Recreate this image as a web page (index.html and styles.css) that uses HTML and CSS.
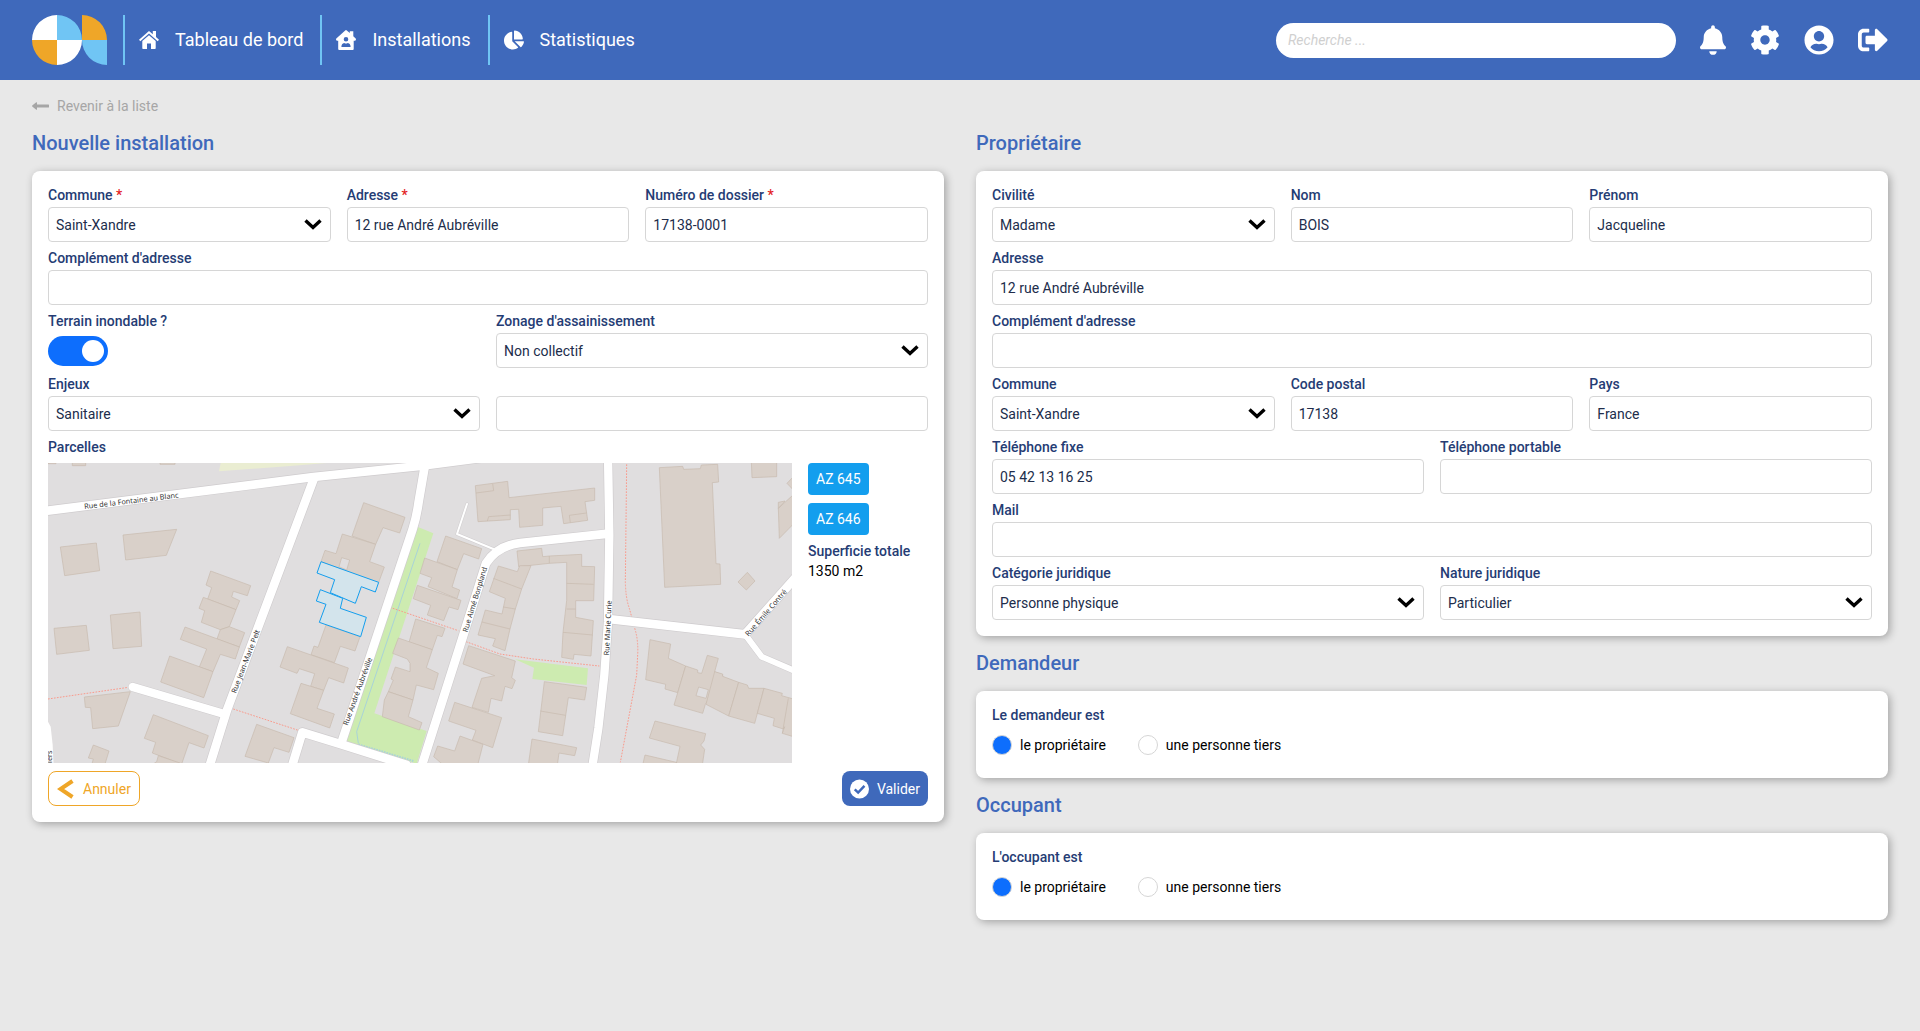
FILE: index.html
```html
<!DOCTYPE html>
<html lang="fr">
<head>
<meta charset="utf-8">
<meta name="viewport" content="width=device-width, initial-scale=1">
<title>Nouvelle installation</title>
<link rel="stylesheet" href="styles.css">
</head>
<body>
<header class="topbar">
  <a class="logo" href="#" aria-label="Accueil">
    <svg viewBox="0 0 75 50" width="75" height="50">
      <path fill="#fff" d="M25 0A25 25 0 0 0 0 25H25ZM25 50A25 25 0 0 0 50 25H25Z"/>
      <path fill="#70c5f4" d="M25 0A25 25 0 0 1 50 25H25ZM50 25A25 25 0 0 0 75 50V25Z"/>
      <path fill="#efa628" d="M25 50A25 25 0 0 1 0 25H25ZM50 0A25 25 0 0 1 75 25H50Z"/>
    </svg>
  </a>
  <nav class="nav">
    <a class="nav-item" href="#">
      <svg viewBox="0 0 20 20" width="20" height="20" fill="#fff"><path d="M10 1 0 9.800l1.300 1.500L10 3.600l8.700 7.700L20 9.800l-3-2.700V1h-3.200v3.300z"/><path d="M10 5.200 3.300 11v7.200q0 .8.800.8H8v-5.500h4V19h3.900q.8 0 .8-.8V11z"/></svg>
      <span>Tableau de bord</span>
    </a>
    <a class="nav-item" href="#">
      <svg viewBox="0 0 20 20" width="20" height="20" fill="#fff" fill-rule="evenodd"><path d="M9.200.4Q10 -.3 10.800.4L13.800 3V1.200h3.500v5l2.400 2.200q.8 1.900-.7 2.300h-1.300V19q0 1-1 1H3.200q-1 0-1-1v-8.300H1Q-.5 10.300.3 8.400zM10 7a2.300 2.300 0 1 0 0 4.600A2.300 2.300 0 0 0 10 7zM8.200 13q-2.800.4-2.800 4h9.200q0-3.600-2.800-4-1.800 1-3.600 0z"/></svg>
      <span>Installations</span>
    </a>
    <a class="nav-item" href="#">
      <svg viewBox="0 0 544 512" width="20" height="20" fill="#fff"><path d="M527.790 288H290.500l158.030 158.030c6.040 6.040 15.980 6.530 22.190.680 38.700-36.460 65.320-85.610 73.130-140.860 1.340-9.460-6.510-17.850-16.060-17.850zm-15.830-64.800C503.720 103.740 408.260 8.280 288.800.04 279.680-.59 272 7.100 272 16.240V240h223.770c9.140 0 16.820-7.680 16.190-16.800zM224 288V50.710c0-9.550-8.390-17.400-17.840-16.060C86.990 51.490-4.100 155.600.14 280.370 4.500 408.510 114.830 513.590 243.030 511.980c50.400-.63 96.970-16.870 135.260-44.030 7.900-5.600 8.420-17.230 1.570-24.080L224 288z"/></svg>
      <span>Statistiques</span>
    </a>
  </nav>
  <div class="tools">
    <input class="search" type="search" placeholder="Recherche ..." aria-label="Recherche">
    <button class="icon-btn" type="button" aria-label="Notifications">
      <svg viewBox="0 0 448 512" width="26" height="30" fill="#fff"><path d="M224 512c35.320 0 63.970-28.650 63.970-64H160.030c0 35.350 28.650 64 63.970 64zm215.390-149.710c-19.320-20.760-55.470-51.990-55.470-154.290 0-77.700-54.480-139.900-127.940-155.160V32c0-17.670-14.320-32-31.980-32s-31.980 14.330-31.980 32v20.840C118.560 68.100 64.080 130.300 64.080 208c0 102.300-36.150 133.530-55.470 154.290-6 6.450-8.660 14.160-8.610 21.710.11 16.400 12.980 32 32.100 32h383.800c19.120 0 32-15.600 32.100-32 .05-7.550-2.610-15.270-8.610-21.710z"/></svg>
    </button>
    <button class="icon-btn" type="button" aria-label="Paramètres">
      <svg viewBox="0 0 512 512" width="30" height="30" fill="#fff"><path d="M487.400 315.700l-42.600-24.600c4.300-23.200 4.300-47 0-70.200l42.600-24.600c4.900-2.800 7.100-8.600 5.500-14-11.100-35.600-30-67.800-54.700-94.600-3.800-4.100-10-5.100-14.800-2.300L380.800 110c-17.900-15.400-38.500-27.300-60.800-35.100V25.800c0-5.600-3.900-10.500-9.400-11.700-36.700-8.200-74.300-7.800-109.200 0-5.500 1.200-9.400 6.100-9.400 11.700V75c-22.200 7.900-42.800 19.800-60.800 35.100L88.700 85.500c-4.900-2.800-11-1.900-14.800 2.300-24.700 26.700-43.600 58.900-54.700 94.600-1.700 5.400.6 11.200 5.500 14L67.300 221c-4.300 23.200-4.300 47 0 70.200l-42.600 24.600c-4.900 2.800-7.100 8.600-5.500 14 11.100 35.600 30 67.800 54.700 94.600 3.800 4.100 10 5.100 14.800 2.300l42.600-24.600c17.900 15.400 38.500 27.300 60.800 35.100v49.200c0 5.600 3.900 10.500 9.400 11.700 36.700 8.200 74.300 7.800 109.200 0 5.500-1.200 9.400-6.100 9.400-11.700v-49.200c22.200-7.900 42.800-19.800 60.800-35.100l42.600 24.600c4.900 2.800 11 1.900 14.800-2.300 24.700-26.700 43.600-58.900 54.700-94.600 1.500-5.500-.7-11.300-5.600-14.100zM256 336c-44.100 0-80-35.900-80-80s35.900-80 80-80 80 35.900 80 80-35.900 80-80 80z"/></svg>
    </button>
    <button class="icon-btn" type="button" aria-label="Mon compte">
      <svg viewBox="0 0 496 512" width="30" height="30" fill="#fff"><path d="M248 8C111 8 0 119 0 256s111 248 248 248 248-111 248-248S385 8 248 8zm0 96c48.600 0 88 39.400 88 88s-39.400 88-88 88-88-39.400-88-88 39.400-88 88-88zm0 344c-58.700 0-111.300-26.600-146.500-68.200 18.800-35.400 55.600-59.800 98.500-59.800 2.400 0 4.800.4 7.100 1.100 13 4.200 26.600 6.900 40.900 6.900 14.300 0 28-2.700 40.900-6.900 2.300-.7 4.700-1.100 7.100-1.100 42.900 0 79.700 24.400 98.500 59.800C359.300 421.400 306.700 448 248 448z"/></svg>
    </button>
    <button class="icon-btn" type="button" aria-label="Se déconnecter">
      <svg viewBox="0 0 512 512" width="30" height="30" fill="#fff"><path d="M497 273L329 441c-15 15-41 4.500-41-17v-96H152c-13.300 0-24-10.700-24-24v-96c0-13.300 10.700-24 24-24h136V88c0-21.400 25.900-32 41-17l168 168c9.300 9.400 9.300 24.600 0 34zM192 436v-40c0-6.600-5.400-12-12-12H96c-17.700 0-32-14.300-32-32V160c0-17.700 14.300-32 32-32h84c6.600 0 12-5.400 12-12V76c0-6.600-5.400-12-12-12H96c-53 0-96 43-96 96v192c0 53 43 96 96 96h84c6.600 0 12-5.400 12-12z"/></svg>
    </button>
  </div>
</header>

<main class="page">
  <a class="back" href="#">
    <svg viewBox="0 0 17 8" width="17" height="8" fill="#a6a6a6"><path d="M4.300.3Q5 0 5 .8v1.700h11.500q.5 0 .5.500v2q0 .5-.5.500H5v1.700q0 .8-.7.500L.2 4.400Q0 4 .2 3.600z"/></svg>
    <span>Revenir à la liste</span>
  </a>

  <form class="columns">
    <div class="column">
      <section class="block">
        <h2 class="title">Nouvelle installation</h2>
        <div class="card">
          <div class="row row-3">
            <div class="field"><label for="i-commune">Commune <span class="req">*</span></label><select id="i-commune"><option>Saint-Xandre</option></select></div>
            <div class="field"><label for="i-adresse">Adresse <span class="req">*</span></label><input id="i-adresse" type="text" value="12 rue André Aubréville"></div>
            <div class="field"><label for="i-dossier">Numéro de dossier <span class="req">*</span></label><input id="i-dossier" type="text" value="17138-0001"></div>
          </div>
          <div class="field"><label for="i-compl">Complément d'adresse</label><input id="i-compl" type="text"></div>
          <div class="row row-2">
            <div class="field"><label for="i-inond">Terrain inondable ?</label><div class="control"><input class="toggle" id="i-inond" type="checkbox" checked></div></div>
            <div class="field"><label for="i-zonage">Zonage d'assainissement</label><select id="i-zonage"><option>Non collectif</option></select></div>
          </div>
          <div class="row row-2">
            <div class="field"><label for="i-enjeux">Enjeux</label><select id="i-enjeux"><option>Sanitaire</option></select></div>
            <div class="field"><input type="text" aria-label="Précision sur les enjeux"></div>
          </div>
          <span class="label">Parcelles</span>
          <div class="parcels">
            <svg class="map" viewBox="24 24 2232 900" preserveAspectRatio="xMidYMid slice" role="img" aria-label="Plan des parcelles">
              <rect class="land" x="0" y="0" width="2300" height="960"/>
              <path fill="#eaedd2" d="M543 20H860V24L760 32 537 49z"/>
              <path class="green" d="M1132 215 1180 235 1003 775 1160 828 1130 926 918 858z"/>
              <path class="green" d="M1425 613 1644 640 1640 690 1477 672 1482 638z"/>
              <path class="stream" d="M1140 265 950 830 955 865"/>
              <path class="stream stream-dash" d="M955 868 1120 918"/>
              <g class="building">
                <path d="M97 20H137V32H97zM360 20H405V28H360zM24 20H48V26H24z"/>
                <path d="M61 276 169 264 179 347 74 362zM249 240 410 223 379 301 257 315zM42 520 139 511 148 586 50 598zM211 480 300 471 305 574 219 581z"/>
                <path d="M133 726 271 710 235 813 158 821 152 758 136 757z"/>
                <path d="M340 779 505 842 492 879 447 863 424 930 400 918 337 894 347 862 313 850z"/>
                <path d="M355 902 420 924V930H335L350 920z"/>
                <path d="M160 870 207 888 194 930H155L160 912 145 909z"/>
                <path d="M650 808 762 848 747 892 702 878 685 924 615 904z"/>
                <path d="M512 348 632 392 622 422 580 409 575 426 599 437 588 464 503 432 515 398 498 390z"/>
                <path d="M490 427 588 464 568 515 541 524 484 502 494 467 477 460z"/>
                <path d="M568 515 614 533 598 576 531 552 541 524z"/>
                <path d="M435 516 598 576 586 612 541 598 519 650 478 636 500 582 421 553z"/>
                <path d="M389 603 519 650 491 728 362 681z"/>
                <path d="M971 143 1095 187 1079 234 1029 218 1007 268 936 243z"/>
                <path fill-rule="evenodd" d="M907 237 1007 268 989 320 1033 336 1015 385 843 320 855 286 888 296zM905 308 929 315 920 345 897 335z"/>
                <path d="M858 510 960 545 945 588 901 574 883 623 813 599 822 573 834 577z"/>
                <path d="M742 575 925 639 911 684 866 668 851 706 812 694 824 656 778 641 771 655 720 636z"/>
                <path d="M783 685 851 706 831 760 883 777 869 819 751 776z"/>
              </g>
              <g class="building" transform="translate(1110)">
                <path d="M107 243 215 281 206 312 161 296 142 344 81 320z"/>
                <path d="M44 309 142 344 126 396 149 405 141 431 54 395 65 368 30 355z"/>
                <path d="M22 391 153 436 144 464 117 456 101 497 52 480 62 451 10 431z"/>
                <path d="M17 492 105 520 96 545 82 541 67 584-3 562z"/>
                <path d="M-35 549 67 584 49 638 85 655 71 704 19 690 9 735-65 710-50 675-57 672-44 636 0 650V625L-8 612-52 595z"/>
                <path d="M-65 710 9 735-5 785 36 803 28 825-83 785-77 735z"/>
                <path d="M196 92 293 79 297 128 554 99V136L525 140 533 196 461 206 453 154 398 159V211L329 217 326 163 301 164V194L204 200z"/>
                <path class="line" d="M198 114 251 107 248 86M301 180 236 185 232 198M529 174 478 181 481 203"/>
                <path d="M321 288 395 280 398 305 418 303 515 298V334L554 335 551 437H497V487L550 497 543 603 492 598 490 613 455 607 459 532 470 436V322L418 325 326 335z"/>
                <path class="line" d="M418 303V325M470 385 551 388M470 462H497M459 532 548 540"/>
                <path d="M265 333 322 350 329 332H363L335 402 316 462 300 522 285 587 248 573 256 551 204 540 226 465 276 477 286 430 238 410z"/>
                <path class="line" d="M250 370 335 402M280 456 316 462M216 501 300 522"/>
                <path d="M176 572 316 618 305 668 316 676 306 701 285 694 275 738 243 730 235 772 186 757 215 670 254 662 159 627z"/>
                <path d="M134 742 275 788 248 878 187 855 198 826 116 798z"/>
                <path d="M150 843 219 868 203 930H100L71 905 83 873 134 888z"/>
                <path d="M403 680 530 697 524 735 475 728 458 842 385 830z"/>
                <path class="line" d="M391 768 467 781"/>
                <path d="M366 852 500 878 494 902 447 894 442 930H355z"/>
                <path d="M748 38 818 34 821 43 871 41 874 30 923 28 926 81 907 83 918 326 930 327 932 388 764 397z"/>
                <path d="M1024 20H1100V65L1026 68zM1012 352 1035 378 1009 405 984 381zM1160 110 1105 160 1108 250 1160 197zM1105 142 1125 138 1105 160zM1150 65 1131 85 1150 105z"/>
                <path d="M720 554 782 567 775 610 827 633 803 713 765 702 767 688 707 674z"/>
                <path fill-rule="evenodd" d="M827 633 863 645V653L875 655 892 601 925 610 914 650 938 660 886 748 878 775 792 750zM866 696 895 704 888 730 858 722z"/>
                <path d="M914 650 938 657V664L986 682 956 783 888 748z"/>
                <path d="M986 682 1012 690 1016 700 1062 700 1034 805 956 783z"/>
                <path d="M1062 700 1117 715 1115 722 1150 732V845L1117 835 1124 815 1120 822 1089 812 1093 790 1042 775z"/>
                <path class="line" d="M1135 730 1117 835"/>
                <path d="M735 798 887 836 882 858 872 870 884 883 877 930H798L810 874 718 849zM705 900 799 922V930H698z"/>
              </g>
              <g class="path-dash">
                <path d="M24 732 265 697M580 762 775 826M1050 457 1255 527M1278 560 1380 597 1480 612 1678 633M1760 28 1756 380Q1757 430 1768 460L1787 530Q1795 560 1793 600L1790 660 1741 922"/>
              </g>
              <g class="road road-edge">
                <path d="M0 170 820 66 1140 33 1330 8" stroke-width="30"/>
                <path d="M822 70 561 765 508 935" stroke-width="30"/>
                <path d="M278 696 550 776" stroke-width="28"/>
                <path d="M1155 30 1136 140Q1130 185 1118 222L904 864" stroke-width="30"/>
                <path d="M754 940 787 832 904 868 1100 930" stroke-width="30"/>
                <path d="M1705 236 1440 264Q1372 272 1338 325L1308 420 1267 550 1146 930" stroke-width="30"/>
                <path d="M1281 147 1251 237 1360 282" stroke-width="9"/>
                <path d="M1704 0 1708 240 1704 500 1693 660 1675 820 1657 935" stroke-width="29"/>
                <path d="M1705 492 2115 538 2270 364" stroke-width="30"/>
                <path d="M2115 538 2165 605 2270 650" stroke-width="21"/>
              </g>
              <g class="road">
                <path d="M0 170 820 66 1140 33 1330 8" stroke-width="26"/>
                <path d="M822 70 561 765 508 935" stroke-width="26"/>
                <path d="M278 696 550 776" stroke-width="25"/>
                <path d="M1155 30 1136 140Q1130 185 1118 222L904 864" stroke-width="26"/>
                <path d="M754 940 787 832 904 868 1100 930" stroke-width="26"/>
                <path d="M1705 236 1440 264Q1372 272 1338 325L1308 420 1267 550 1146 930" stroke-width="26"/>
                <path d="M1281 147 1251 237 1360 282" stroke-width="6"/>
                <path d="M1704 0 1708 240 1704 500 1693 660 1675 820 1657 935" stroke-width="25"/>
                <path d="M1705 492 2115 538 2270 364" stroke-width="26"/>
                <path d="M2115 538 2165 605 2270 650" stroke-width="18"/>
              </g>
              <path fill="#fff" d="M0 800H24L32 815 38 870 41 940H0z"/>
              <path class="plot" d="M843 320 1016 382 1006 411 964 395 946 445 871 413 884 374 831 354z"/>
              <path class="plot" d="M841 404 908 430 901 460 979 487 962 545 838 502 858 448 829 438z"/>
              <g class="street">
                <text transform="translate(275 145) rotate(-7)">Rue de la Fontaine au Blanc</text>
                <text transform="translate(624 622) rotate(-69)">Rue Jean-Marie Pelt</text>
                <text transform="translate(960 712) rotate(-70)">Rue André Aubréville</text>
                <text transform="translate(1312 436) rotate(-73)">Rue Aimé Bonpland</text>
                <text transform="translate(1711 519) rotate(-87)">Rue Marie Curie</text>
                <text transform="translate(2184 478) rotate(-49)">Rue Émile Contré</text>
                <text transform="translate(36 905) rotate(-90)">iers</text>
              </g>
            </svg>
            <div class="parcel-info">
              <span class="tag">AZ 645</span>
              <span class="tag">AZ 646</span>
              <dl class="surface"><dt class="label">Superficie totale</dt><dd>1350 m2</dd></dl>
            </div>
          </div>
          <div class="actions">
            <button class="btn btn-cancel" type="button">
              <svg viewBox="0 0 18 20" width="18" height="20" fill="none" stroke="#efa628" stroke-width="4"><path d="M15.500 2 3.500 10l12 8"/></svg>
              <span>Annuler</span>
            </button>
            <button class="btn btn-ok" type="submit">
              <svg viewBox="0 0 20 20" width="19" height="20"><circle cx="10" cy="10" r="10" fill="#fff"/><path d="M5 10.300 8.600 13.800 15.200 6.800" fill="none" stroke="#3f69bb" stroke-width="2.600"/></svg>
              <span>Valider</span>
            </button>
          </div>
        </div>
      </section>
    </div>

    <div class="column">
      <section class="block">
        <h2 class="title">Propriétaire</h2>
        <div class="card">
          <div class="row row-3">
            <div class="field"><label for="p-civ">Civilité</label><select id="p-civ"><option>Madame</option></select></div>
            <div class="field"><label for="p-nom">Nom</label><input id="p-nom" type="text" value="BOIS"></div>
            <div class="field"><label for="p-prenom">Prénom</label><input id="p-prenom" type="text" value="Jacqueline"></div>
          </div>
          <div class="field"><label for="p-adresse">Adresse</label><input id="p-adresse" type="text" value="12 rue André Aubréville"></div>
          <div class="field"><label for="p-compl">Complément d'adresse</label><input id="p-compl" type="text"></div>
          <div class="row row-3">
            <div class="field"><label for="p-commune">Commune</label><select id="p-commune"><option>Saint-Xandre</option></select></div>
            <div class="field"><label for="p-cp">Code postal</label><input id="p-cp" type="text" value="17138"></div>
            <div class="field"><label for="p-pays">Pays</label><input id="p-pays" type="text" value="France"></div>
          </div>
          <div class="row row-2">
            <div class="field"><label for="p-fixe">Téléphone fixe</label><input id="p-fixe" type="tel" value="05 42 13 16 25"></div>
            <div class="field"><label for="p-port">Téléphone portable</label><input id="p-port" type="tel"></div>
          </div>
          <div class="field"><label for="p-mail">Mail</label><input id="p-mail" type="email"></div>
          <div class="row row-2">
            <div class="field"><label for="p-cat">Catégorie juridique</label><select id="p-cat"><option>Personne physique</option></select></div>
            <div class="field"><label for="p-nat">Nature juridique</label><select id="p-nat"><option>Particulier</option></select></div>
          </div>
        </div>
      </section>

      <section class="block">
        <h2 class="title">Demandeur</h2>
        <div class="card">
          <fieldset class="choices">
            <legend class="label">Le demandeur est</legend>
            <div class="control">
              <label class="choice"><input type="radio" name="demandeur" checked>le propriétaire</label>
              <label class="choice"><input type="radio" name="demandeur">une personne tiers</label>
            </div>
          </fieldset>
        </div>
      </section>

      <section class="block">
        <h2 class="title">Occupant</h2>
        <div class="card">
          <fieldset class="choices">
            <legend class="label">L'occupant est</legend>
            <div class="control">
              <label class="choice"><input type="radio" name="occupant" checked>le propriétaire</label>
              <label class="choice"><input type="radio" name="occupant">une personne tiers</label>
            </div>
          </fieldset>
        </div>
      </section>
    </div>
  </form>
</main>
</body>
</html>
```

FILE: styles.css
```css
*,
*::before,
*::after {
  box-sizing: border-box;
}

body {
  margin: 0;
  background: #e8e8e8;
  color: #000;
  font: 14px/16px Roboto, "Liberation Sans", sans-serif;
}

button,
input,
select {
  margin: 0;
  font: inherit;
}

svg {
  display: block;
  flex: none;
}

/* Header */
.topbar {
  display: flex;
  align-items: center;
  min-height: 80px;
  padding: 0 32px;
  background: #3f69bb;
}

.logo {
  margin-right: 16px;
}

.nav {
  display: flex;
}

.nav-item {
  display: flex;
  align-items: center;
  gap: 16px;
  height: 50px;
  padding: 0 17px 0 14px;
  border-left: 2px solid #70c5f4;
  color: #fff;
  font-size: 18px;
  line-height: 24px;
  text-decoration: none;
  white-space: nowrap;
}

.tools {
  display: flex;
  align-items: center;
  gap: 24px;
  margin-left: auto;
}

.search {
  width: 400px;
  height: 35px;
  padding: 0 12px;
  border: 0;
  border-radius: 18px;
  background: #fff;
  appearance: none;
}

.search::placeholder {
  color: #d0d0d0;
  font-style: italic;
  opacity: 1;
}

.icon-btn {
  padding: 0;
  border: 0;
  background: none;
  cursor: pointer;
}

/* Page */
.page {
  padding: 16px 32px 32px;
}

.back {
  display: inline-flex;
  align-items: center;
  gap: 8px;
  height: 20px;
  color: #a6a6a6;
  text-decoration: none;
}

.columns {
  display: grid;
  grid-template-columns: repeat(2, minmax(0, 1fr));
  align-items: start;
  gap: 32px;
  margin-top: 16px;
}

.column {
  display: grid;
  gap: 16px;
}

.title {
  margin: 0 0 16px;
  color: #3f69bb;
  font-size: 20px;
  font-weight: 500;
  line-height: 23px;
}

.card {
  display: flex;
  flex-direction: column;
  gap: 8px;
  padding: 16px;
  border-radius: 8px;
  background: #fff;
  box-shadow: 2px 2px 8px rgba(0, 0, 0, 0.3);
}

/* Fields */
.row {
  display: grid;
  align-items: end;
  gap: 16px;
}

.row-2 {
  grid-template-columns: repeat(2, minmax(0, 1fr));
}

.row-3 {
  grid-template-columns: repeat(3, minmax(0, 1fr));
}

.field {
  display: flex;
  flex-direction: column;
  gap: 4px;
}

.field label,
.label {
  color: #253c74;
  font-weight: 500;
}

.req {
  color: #e3231f;
}

.field input:not(.toggle),
.field select {
  width: 100%;
  height: 35px;
  padding: 0 7px;
  border: 1px solid #d6d6d6;
  border-radius: 4px;
  background: #fff;
  color: #212d4b;
  appearance: none;
}

.field select {
  background: #fff url("data:image/svg+xml,%3Csvg xmlns='http://www.w3.org/2000/svg' viewBox='0 0 18 11'%3E%3Cpath d='M1.500 1.500 9 8.500l7.500-7' fill='none' stroke='%23000' stroke-width='3.400'/%3E%3C/svg%3E") right 8px center / 18px 11px no-repeat;
}

.control {
  display: flex;
  align-items: center;
  gap: 32px;
  height: 35px;
}

.toggle {
  display: flex;
  justify-content: flex-end;
  width: 60px;
  height: 30px;
  padding: 4px;
  border-radius: 15px;
  background: #0d6efd;
  appearance: none;
}

.toggle::before {
  content: "";
  width: 22px;
  height: 22px;
  border-radius: 50%;
  background: #fff;
}

.toggle:not(:checked) {
  justify-content: flex-start;
  background: #bbb;
}

/* Parcels */
.parcels {
  display: flex;
  gap: 16px;
}

.map {
  flex: 1 1 0;
  min-width: 0;
  height: 300px;
}

.parcel-info {
  display: flex;
  flex-direction: column;
  align-items: flex-start;
  gap: 8px;
  width: 120px;
}

.tag {
  padding: 8px;
  border-radius: 4px;
  background: #139eee;
  color: #fff;
}

.surface {
  display: grid;
  gap: 4px;
  margin: 0;
}

.surface dd {
  margin: 0;
}

.land {
  fill: #e0dedf;
}

.green {
  fill: #cdebb0;
}

.building {
  fill: #d9d0c9;
  stroke: #c7b9ad;
  stroke-width: 2px;
}

.line {
  fill: none;
}

.stream {
  fill: none;
  stroke: #a9d3d8;
  stroke-width: 3px;
}

.stream-dash {
  stroke-width: 6px;
  stroke-dasharray: 5 3;
}

.path-dash {
  fill: none;
  stroke: #fa9a8c;
  stroke-width: 3px;
  stroke-dasharray: 5 4;
}

.road {
  fill: none;
  stroke: #fff;
  stroke-linecap: round;
  stroke-linejoin: round;
}

.road-edge {
  stroke: #cfccce;
}

.plot {
  fill: #d3e4ec;
  stroke: #139eee;
  stroke-width: 3px;
}

.street {
  fill: #333;
  font-family: "Noto Sans", sans-serif;
  font-size: 22px;
  text-anchor: middle;
}

/* Buttons */
.actions {
  display: flex;
  justify-content: space-between;
}

.btn {
  display: flex;
  align-items: center;
  gap: 8px;
  height: 35px;
  padding: 0 8px;
  border: 1px solid #efa628;
  border-radius: 8px;
  background: #fff;
  color: #efa628;
  cursor: pointer;
}

.btn-ok {
  border: 0;
  background: #3f69bb;
  color: #fff;
}

/* Radio groups */
.choices {
  display: grid;
  gap: 4px;
  margin: 0;
  padding: 0;
  border: 0;
}

.choices legend {
  margin-bottom: 4px;
  padding: 0;
}

.choice {
  display: flex;
  align-items: center;
  gap: 8px;
}

.choice input {
  width: 20px;
  height: 20px;
  border: 1px solid #d6d6d6;
  border-radius: 50%;
  background: #fff;
  appearance: none;
}

.choice input:checked {
  background: #0d6efd;
}

@media (max-width: 1100px) {
  .topbar {
    flex-wrap: wrap;
    gap: 16px;
    padding: 16px 32px;
  }

  .columns {
    grid-template-columns: minmax(0, 1fr);
  }
}
```
